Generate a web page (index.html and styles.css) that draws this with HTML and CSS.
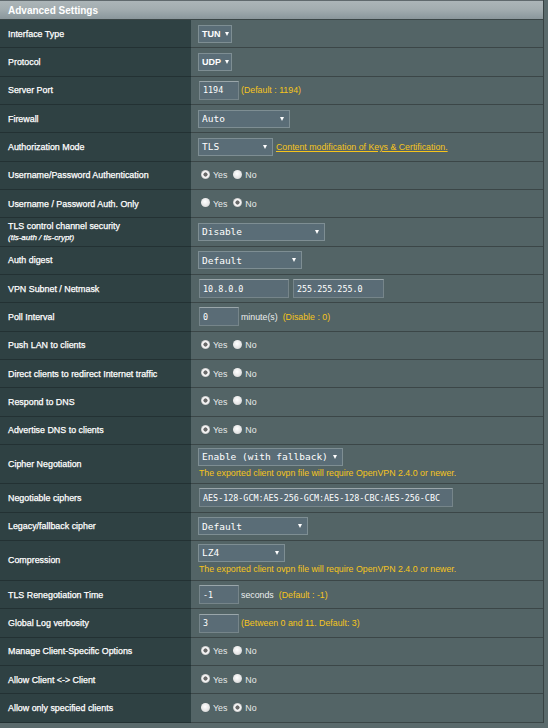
FILE: index.html
```html
<!DOCTYPE html>
<html>
<head>
<meta charset="utf-8">
<title>Advanced Settings</title>
<link rel="stylesheet" href="styles.css">
</head>
<body>
<div class="panel">
  <div class="head">Advanced Settings</div>

  <div class="row"><div class="lab">Interface Type</div><div class="val"><span class="sel sans w34">TUN<i class="arr"></i></span></div></div>
  <div class="row"><div class="lab">Protocol</div><div class="val"><span class="sel sans w34">UDP<i class="arr"></i></span></div></div>
  <div class="row"><div class="lab">Server Port</div><div class="val"><span class="inp w40">1194</span><span class="hint">(Default : 1194)</span></div></div>
  <div class="row"><div class="lab">Firewall</div><div class="val"><span class="sel w92">Auto<i class="arr"></i></span></div></div>
  <div class="row"><div class="lab">Authorization Mode</div><div class="val"><span class="sel w75">TLS<i class="arr"></i></span><a class="link" href="#">Content modification of Keys &amp; Certification.</a></div></div>
  <div class="row"><div class="lab">Username/Password Authentication</div><div class="val"><label class="opt"><input type="radio" class="radio" name="upa" checked>Yes</label><label class="opt"><input type="radio" class="radio" name="upa">No</label></div></div>
  <div class="row"><div class="lab">Username / Password Auth. Only</div><div class="val"><label class="opt"><input type="radio" class="radio" name="upo">Yes</label><label class="opt"><input type="radio" class="radio" name="upo" checked>No</label></div></div>
  <div class="row"><div class="lab two">TLS control channel security<span class="sub">(tls-auth / tls-crypt)</span></div><div class="val"><span class="sel w127">Disable<i class="arr"></i></span></div></div>
  <div class="row"><div class="lab">Auth digest</div><div class="val"><span class="sel w104">Default<i class="arr"></i></span></div></div>
  <div class="row"><div class="lab">VPN Subnet / Netmask</div><div class="val"><span class="inp w90">10.8.0.0</span><span class="inp w91 gap4">255.255.255.0</span></div></div>
  <div class="row"><div class="lab">Poll Interval</div><div class="val"><span class="inp w40">0</span><span class="unit">minute(s)</span><span class="hint">(Disable : 0)</span></div></div>
  <div class="row"><div class="lab">Push LAN to clients</div><div class="val"><label class="opt"><input type="radio" class="radio" name="pl" checked>Yes</label><label class="opt"><input type="radio" class="radio" name="pl">No</label></div></div>
  <div class="row"><div class="lab">Direct clients to redirect Internet traffic</div><div class="val"><label class="opt"><input type="radio" class="radio" name="dc" checked>Yes</label><label class="opt"><input type="radio" class="radio" name="dc">No</label></div></div>
  <div class="row"><div class="lab">Respond to DNS</div><div class="val"><label class="opt"><input type="radio" class="radio" name="rd" checked>Yes</label><label class="opt"><input type="radio" class="radio" name="rd">No</label></div></div>
  <div class="row"><div class="lab">Advertise DNS to clients</div><div class="val"><label class="opt"><input type="radio" class="radio" name="ad" checked>Yes</label><label class="opt"><input type="radio" class="radio" name="ad">No</label></div></div>

  <div class="row tall"><div class="lab">Cipher Negotiation</div><div class="val stack"><span class="sel w145">Enable (with fallback)<i class="arr"></i></span><span class="note">The exported client ovpn file will require OpenVPN 2.4.0 or newer.</span></div></div>
  <div class="row r29"><div class="lab">Negotiable ciphers</div><div class="val"><span class="inp w254">AES-128-GCM:AES-256-GCM:AES-128-CBC:AES-256-CBC</span></div></div>
  <div class="row r28"><div class="lab">Legacy/fallback cipher</div><div class="val"><span class="sel w110">Default<i class="arr"></i></span></div></div>
  <div class="row tall2"><div class="lab">Compression</div><div class="val stack"><span class="sel w87">LZ4<i class="arr"></i></span><span class="note">The exported client ovpn file will require OpenVPN 2.4.0 or newer.</span></div></div>

  <div class="row r284"><div class="lab">TLS Renegotiation Time</div><div class="val"><span class="inp w40">-1</span><span class="unit">seconds</span><span class="hint">(Default : -1)</span></div></div>
  <div class="row r284"><div class="lab">Global Log verbosity</div><div class="val"><span class="inp w40">3</span><span class="hint">(Between 0 and 11. Default: 3)</span></div></div>
  <div class="row r284"><div class="lab">Manage Client-Specific Options</div><div class="val"><label class="opt"><input type="radio" class="radio" name="mc" checked>Yes</label><label class="opt"><input type="radio" class="radio" name="mc">No</label></div></div>
  <div class="row r284"><div class="lab">Allow Client &lt;-&gt; Client</div><div class="val"><label class="opt"><input type="radio" class="radio" name="cc" checked>Yes</label><label class="opt"><input type="radio" class="radio" name="cc">No</label></div></div>
  <div class="row r284"><div class="lab">Allow only specified clients</div><div class="val"><label class="opt"><input type="radio" class="radio" name="ao">Yes</label><label class="opt"><input type="radio" class="radio" name="ao" checked>No</label></div></div>
</div>
</body>
</html>
```

FILE: styles.css
```css
* { box-sizing: border-box; }
html, body { margin: 0; padding: 0; }
body {
  width: 548px;
  height: 728px;
  overflow: hidden;
  background: #5a6a6c;
  font-family: "Liberation Sans", Arial, sans-serif;
}
.panel {
  width: 544px;
  border-right: 1px solid #384243;
}
.head {
  height: 20px;
  border-top: 1px solid #60696d;
  border-bottom: 1px solid #3a4546;
  background: linear-gradient(#acb5b8 0%, #a3adb0 45%, #95a1a5 75%, #8a969b 100%);
  color: #fff;
  font-weight: bold;
  font-size: 10px;
  padding-left: 8px;
  display: flex;
  align-items: center;
}
.row {
  display: grid;
  grid-template-columns: 191px 1fr;
  height: 28.33px;
}
.row.tall { height: 39px; }
.row.r29 { height: 29px; }
.row.r28 { height: 28px; }
.row.tall2 { height: 40px; }
.row.r284 { height: 28.4px; }
.lab {
  background: #2f4143;
  border-bottom: 1px solid #233133;
  color: #fff;
  font-size: 8.9px;
  -webkit-text-stroke: 0.25px #fff;
  padding-left: 8px;
  display: flex;
  align-items: center;
  white-space: nowrap;
}
.lab.two {
  flex-direction: column;
  align-items: flex-start;
  justify-content: center;
  line-height: 11px;
}
.sub {
  font-style: italic;
  font-size: 8px;
}
.val {
  background: #536466;
  border-bottom: 1px solid #3b4647;
  padding-left: 7px;
  display: flex;
  align-items: center;
  color: #eceeee;
  font-size: 8.8px;
  white-space: nowrap;
}
.val.stack {
  flex-direction: column;
  align-items: flex-start;
  justify-content: flex-start;
  padding-top: 3px;
}
.sel {
  height: 18px;
  display: inline-flex;
  align-items: center;
  justify-content: space-between;
  background: #5a6d77;
  border: 1px solid #7e8e93;
  color: #fff;
  font-family: "DejaVu Sans Mono", "Liberation Mono", monospace;
  font-size: 9.5px;
  padding: 0 5px 0 3px;
}
.sel.sans {
  font-family: "Liberation Sans", Arial, sans-serif;
  font-weight: bold;
  font-size: 9px;
  justify-content: flex-start;
  gap: 4px;
}
.arr {
  width: 0;
  height: 0;
  border-left: 2.5px solid transparent;
  border-right: 2.5px solid transparent;
  border-top: 4px solid #fff;
}
.inp {
  height: 19px;
  margin-left: 1px;
  display: inline-flex;
  align-items: center;
  background: #5a6c76;
  border: 1px solid #76858a;
  border-top-color: #9aa6aa;
  color: #fff;
  font-family: "DejaVu Sans Mono", "Liberation Mono", monospace;
  font-size: 8.4px;
  padding-left: 3px;
}
.gap4 { margin-left: 4px; }
.w34 { width: 34px; }
.w40 { width: 40px; }
.w75 { width: 75px; }
.w87 { width: 87px; }
.w90 { width: 90px; }
.w91 { width: 91px; }
.w92 { width: 92px; }
.w104 { width: 104px; }
.w110 { width: 110px; }
.w127 { width: 127px; }
.w145 { width: 145px; }
.w254 { width: 254px; }
.hint {
  color: #f6c41c;
  margin-left: 2px;
}
.unit {
  color: #eceeee;
  margin-left: 2px;
  margin-right: 3px;
}
.link {
  color: #f6c41c;
  text-decoration: underline;
  margin-left: 3px;
}
.note {
  color: #f6c41c;
  font-size: 8.8px;
  line-height: 11px;
  margin-top: 2px;
  margin-left: 1px;
}
.opt {
  display: inline-flex;
  align-items: center;
  margin-left: 3px;
  margin-right: 3px;
  color: #e8eaea;
}
.radio {
  appearance: none;
  -webkit-appearance: none;
  width: 9px;
  height: 9px;
  margin: -2px 3px 0 0;
  border-radius: 50%;
  background: radial-gradient(circle at 45% 40%, #ffffff 0, #e6e6e6 55%, #c4c4c4 100%);
}
.radio:checked {
  background: radial-gradient(circle, #6a6a6a 0, #6a6a6a 1.8px, #ffffff 2.4px, #f2f2f2 3.2px, #c2c2c2 4.5px);
}
```
